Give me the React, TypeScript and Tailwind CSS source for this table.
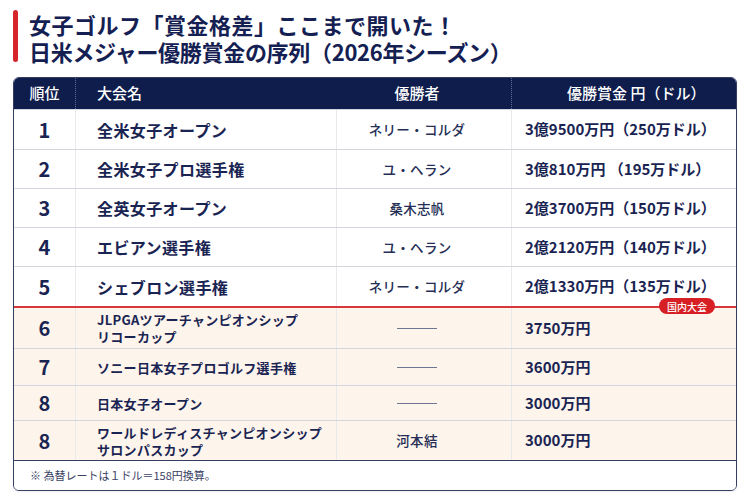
const jp = "font-['Noto_Sans_CJK_JP','Noto_Sans',sans-serif]"

type Row = {
  rank: string
  name: string[]
  winner: string | null
  prize: string
  h: string
  domestic?: boolean
  first?: boolean
}

const rows: Row[] = [
  { rank: '1', name: ['全米女子オープン'], winner: 'ネリー・コルダ', prize: '3億9500万円（250万ドル）', h: 'h-[40px]' },
  { rank: '2', name: ['全米女子プロ選手権'], winner: 'ユ・ヘラン', prize: '3億810万円 （195万ドル）', h: 'h-[39px]' },
  { rank: '3', name: ['全英女子オープン'], winner: '桑木志帆', prize: '2億3700万円（150万ドル）', h: 'h-[39px]' },
  { rank: '4', name: ['エビアン選手権'], winner: 'ユ・ヘラン', prize: '2億2120万円（140万ドル）', h: 'h-[39px]' },
  { rank: '5', name: ['シェブロン選手権'], winner: 'ネリー・コルダ', prize: '2億1330万円（135万ドル）', h: 'h-[40px]' },
  { rank: '6', name: ['JLPGAツアーチャンピオンシップ', 'リコーカップ'], winner: null, prize: '3750万円', h: 'h-[42px]', domestic: true, first: true },
  { rank: '7', name: ['ソニー日本女子プロゴルフ選手権'], winner: null, prize: '3600万円', h: 'h-[37px]', domestic: true },
  { rank: '8', name: ['日本女子オープン'], winner: null, prize: '3000万円', h: 'h-[35px]', domestic: true },
  { rank: '8', name: ['ワールドレディスチャンピオンシップ', 'サロンパスカップ'], winner: '河本結', prize: '3000万円', h: 'h-[40px]', domestic: true },
]

const cols = 'grid grid-cols-[62px_261px_175px_1fr]'

function TableRow({ row }: { row: Row }) {
  const border = row.first ? 'border-t-2 border-[#d8383c]' : 'border-t border-[#d3d6de]'
  return (
    <div className={`${cols} ${row.h} ${border} relative ${row.domestic ? 'bg-[#fdf4ec]' : 'bg-white'}`}>
      <div className="flex items-center justify-center border-r border-[#e9e9ec] text-[20px] font-bold text-[#1a2452]">
        {row.rank}
      </div>
      <div className="flex items-center border-r border-[#e9e9ec] pl-[21px]">
        {row.domestic ? (
          <div className="text-[13px] font-bold leading-[17px] tracking-[0.3px] text-[#1a2452]">
            {row.name.map((n) => (
              <div key={n}>{n}</div>
            ))}
          </div>
        ) : (
          <span className="text-[16px] font-bold tracking-[0.4px] text-[#1a2452]">{row.name[0]}</span>
        )}
      </div>
      <div className="flex items-center justify-center border-r border-[#e9e9ec] pr-[14px]">
        {row.winner ? (
          <span className="text-[13.5px] font-medium tracking-[0.3px] text-[#252e55]">{row.winner}</span>
        ) : (
          <span className="h-px w-[40px] bg-[#6f7592]" />
        )}
      </div>
      <div className="flex items-center pl-[13px] text-[15px] font-bold text-[#1a2452]">{row.prize}</div>
      {row.first && (
        <span className="absolute right-[21px] top-[-10px] flex h-[16px] w-[56px] items-center justify-center rounded-full bg-[#d71f26] text-[10px] font-medium text-white">
          国内大会
        </span>
      )}
    </div>
  )
}

export default function App() {
  return (
    <div className={`${jp} h-[500px] w-[750px] bg-white pt-[10px]`}>
      <div className="flex pl-[13px]">
        <div className="h-[52px] w-[5px] rounded-full bg-[#d7262b]" />
        <div className="ml-[11px] pt-[1px] text-[22px] font-bold leading-[27px] text-[#142052]">
          <div className="tracking-[0.5px]">女子ゴルフ「賞金格差」ここまで開いた！</div>
          <div className="tracking-[-0.3px]">日米メジャー優勝賞金の序列（2026年シーズン）</div>
        </div>
      </div>

      <div className="ml-[13px] mt-[12px] w-[724px] overflow-hidden rounded-[6px] border border-[#353e63] shadow-[0_1px_2px_rgba(0,0,0,0.08)]">
        <div className={`${cols} h-[31px] bg-[#0e1d4c] text-[15px] font-medium text-white`}>
          <div className="flex items-center justify-center border-r border-dotted border-[#5d6b98]">順位</div>
          <div className="flex items-center pl-[21px]">大会名</div>
          <div className="flex items-center justify-center border-r border-dotted border-[#5d6b98] pr-[14px]">優勝者</div>
          <div className="flex items-center pl-[55px]">優勝賞金 円（ドル）</div>
        </div>
        {rows.map((r, i) => (
          <TableRow key={i} row={r} />
        ))}
        <div className="flex h-[30px] items-center border-t border-[#353e63] bg-white pl-[16px] text-[11px] text-[#3a4264]">
          ※ 為替レートは１ドル＝158円換算。
        </div>
      </div>
    </div>
  )
}
